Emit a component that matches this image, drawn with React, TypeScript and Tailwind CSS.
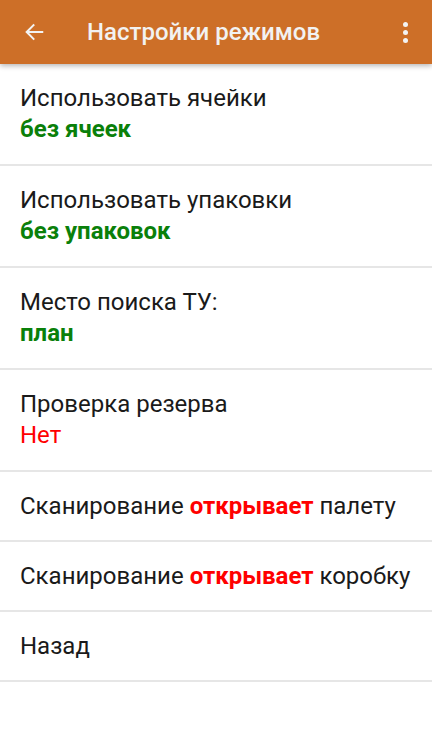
const font = { fontFamily: "Roboto, 'Noto Sans', sans-serif" };

function TwoLine({ title, value, color, bold }: { title: string; value: string; color: string; bold?: boolean }) {
  return (
    <div className="h-[102px] border-b-2 border-[#e6e6e6] px-5 pt-[19px]">
      <div className="text-[24px] leading-[30px] text-[#1a1a1a]">{title}</div>
      <div className={`text-[24px] leading-[32px] ${bold ? "font-bold" : ""}`} style={{ color }}>
        {value}
      </div>
    </div>
  );
}

function OneLine({ children }: { children: React.ReactNode }) {
  return (
    <div className="flex h-[70px] items-center border-b-2 border-[#e6e6e6] px-5 text-[24px] text-[#1a1a1a]">
      <span>{children}</span>
    </div>
  );
}

export default function App() {
  return (
    <div className="h-[737px] w-[432px] bg-white" style={font}>
      <div className="relative z-10 flex h-16 items-center bg-[#cd6f28] shadow-[0_2px_5px_rgba(0,0,0,0.28)]">
        <svg className="ml-[23px] h-[22px] w-[22px]" viewBox="0 0 24 24" fill="none" stroke="#f3f3f3" strokeWidth="2.2" strokeLinecap="square">
          <path d="M21 12H4.5M11.5 4.5L4 12l7.5 7.5" />
        </svg>
        <span className="ml-[42px] text-[24px] font-medium text-[#f2f2f2]">Настройки режимов</span>
        <div className="ml-auto mr-[24px] flex flex-col gap-[3px]">
          <span className="h-[5px] w-[5px] rounded-full bg-[#f3f3f3]" />
          <span className="h-[5px] w-[5px] rounded-full bg-[#f3f3f3]" />
          <span className="h-[5px] w-[5px] rounded-full bg-[#f3f3f3]" />
        </div>
      </div>
      <TwoLine title="Использовать ячейки" value="без ячеек" color="#0a800a" bold />
      <TwoLine title="Использовать упаковки" value="без упаковок" color="#0a800a" bold />
      <TwoLine title="Место поиска ТУ:" value="план" color="#0a800a" bold />
      <TwoLine title="Проверка резерва" value="Нет" color="#ff0000" />
      <OneLine>
        Сканирование <span className="font-bold text-[#ff0000]">открывает</span> палету
      </OneLine>
      <OneLine>
        Сканирование <span className="font-bold text-[#ff0000]">открывает</span> коробку
      </OneLine>
      <OneLine>Назад</OneLine>
    </div>
  );
}
